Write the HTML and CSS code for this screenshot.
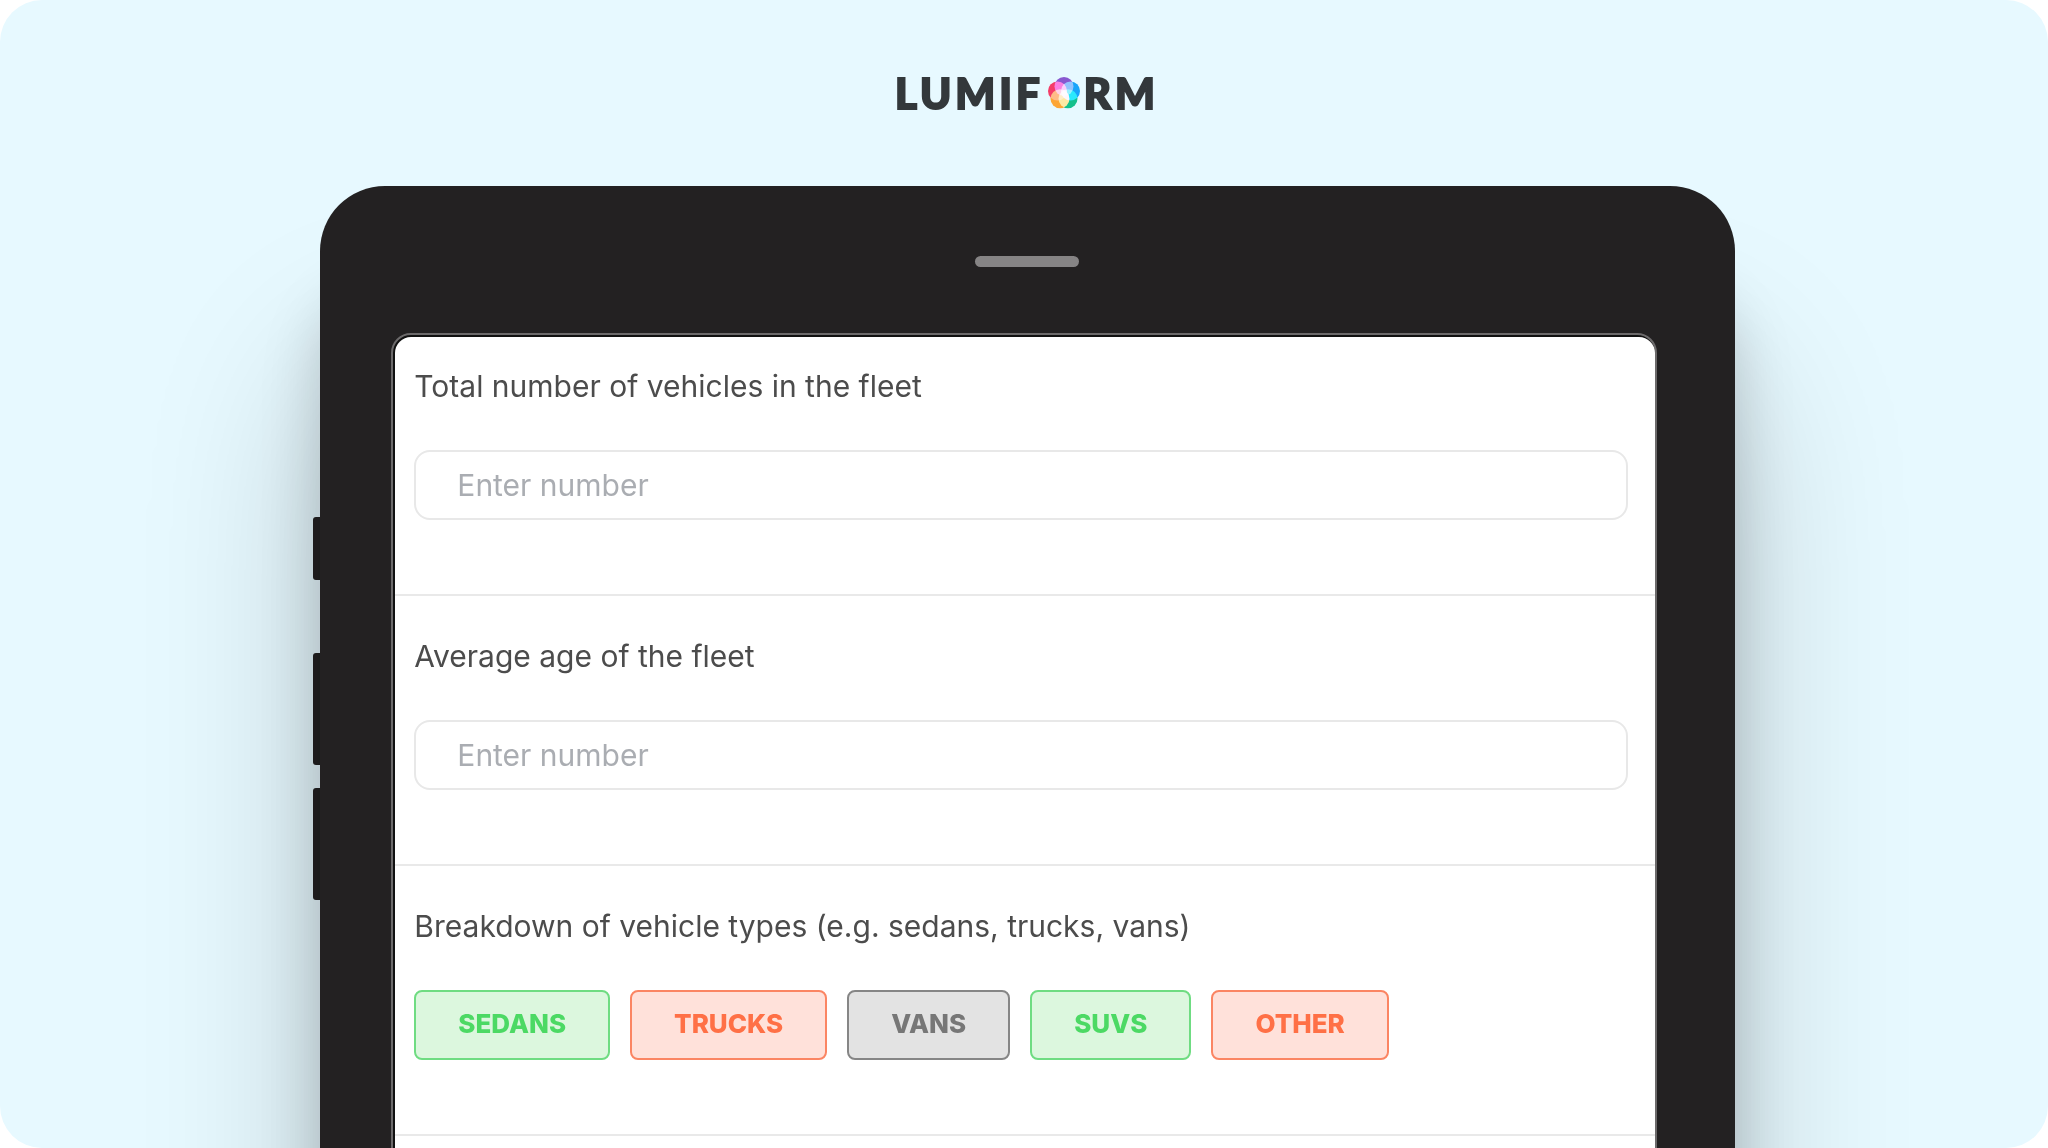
FILE: index.html
```
<!DOCTYPE html>
<html lang="en">
<head>
  <meta charset="UTF-8" />
  <meta name="viewport" content="width=device-width, initial-scale=1" />
  <title>Lumiform - Fleet Checklist</title>
  <link rel="stylesheet" href="styles.css">
</head>
<body>

  <div class="stage">
    <header class="logo">
      <span>LUMIF</span>
      <svg class="logo-mark" viewBox="0 0 34 34" role="img" aria-label="O">
        <g class="petals">
          <circle cx="17" cy="10.5" r="9.5" fill="#8858d0" />
          <circle cx="23.5" cy="15" r="9.5" fill="#18a4fa" />
          <circle cx="21" cy="22.8" r="9.5" fill="#14c08c" />
          <circle cx="13" cy="22.8" r="9.5" fill="#fda634" />
          <circle cx="10.5" cy="15" r="9.5" fill="#f43c68" />
        </g>
      </svg>
      <span>RM</span>
    </header>

    <div class="tablet">
      <div class="side-buttons">
        <span class="key small"></span>
        <span class="key"></span>
        <span class="key"></span>
      </div>

      <div class="bezel">
        <div class="speaker"></div>

        <div class="screen">
          <form class="checklist">
            <div class="question">
              <label for="totalVehicles">Total number of vehicles in the fleet</label>
              <input type="text" id="totalVehicles" placeholder="Enter number" />
            </div>

            <div class="question">
              <label for="averageAge">Average age of the fleet</label>
              <input type="text" id="averageAge" placeholder="Enter number" />
            </div>

            <div class="question" role="group" aria-labelledby="vehicleTypes">
              <p id="vehicleTypes">Breakdown of vehicle types (e.g. sedans, trucks, vans)</p>
              <div class="options">
                <button type="button" class="green">SEDANS</button>
                <button type="button" class="red">TRUCKS</button>
                <button type="button" class="gray">VANS</button>
                <button type="button" class="green">SUVS</button>
                <button type="button" class="red">OTHER</button>
              </div>
            </div>
          </form>
        </div>
      </div>
    </div>
  </div>

</body>
</html>
```
FILE: styles.css
```
* {
  box-sizing: border-box;
}

body {
  margin: 0;
  background-color: #fff;
  font-family: Inter, "Liberation Sans", sans-serif;
}

.stage {
  height: 100vh;
  overflow: hidden;
  border-radius: 42px;
  background-color: #e7f9ff;
}

/* Logo */
.logo {
  display: flex;
  justify-content: center;
  align-items: center;
  gap: 3px;
  padding: 66px 0 66px 6px;
  font-family: Lato, sans-serif;
  font-size: 42px;
  font-weight: 900;
  line-height: 54px;
  letter-spacing: 4px;
  color: #33383b;
  -webkit-text-stroke: 2px #33383b;
}

.logo-mark {
  width: 34px;
  height: 34px;
}

.petals {
  isolation: isolate;
}

.petals circle {
  mix-blend-mode: screen;
}

/* Tablet */
.tablet {
  display: flex;
  width: 69.4%;
  margin: 0 auto;
}

.side-buttons {
  display: flex;
  flex-direction: column;
  gap: 23px;
  width: 7px;
  padding-top: 331px;
}

.key {
  height: 112px;
  border-radius: 3px 0 0 3px;
  background-color: #232122;
}

.key.small {
  height: 63px;
  margin-bottom: 50px;
}

.bezel {
  flex: 1;
  padding: 70px 0 80px;
  border-radius: 65px;
  background-color: #232122;
  box-shadow: 0 180px 180px rgba(0, 0, 0, 0.2), 0 110px 60px rgba(0, 0, 0, 0.18);
}

.speaker {
  width: 104px;
  height: 11px;
  margin: 0 auto 66px;
  border-radius: 6px;
  background-color: #868485;
}

.screen {
  margin: 0 78px 0 71px;
  padding: 2px 0 0 2px;
  border: 2px solid #6c6a6b;
  border-radius: 20px;
  background-color: #111;
}

/* Checklist */
.checklist {
  min-height: 1400px;
  border-radius: 16px;
  background-color: #fff;
}

.question {
  padding: 40px 27px 74px 19px;
  border-bottom: 2px solid #e9e9e9;
}

.question:first-child {
  padding-top: 29px;
}

.question label,
.question p {
  display: block;
  margin: 0 0 44px;
  font-size: 30px;
  line-height: 40px;
  color: #4c4c4c;
}

.question input {
  display: block;
  width: 100%;
  height: 70px;
  padding: 0 41px;
  border: 2px solid #e8e8e8;
  border-radius: 16px;
  font-family: inherit;
  font-size: 30px;
  color: #4c4c4c;
}

.question input::placeholder {
  color: #aaadb2;
}

.options {
  display: flex;
  flex-wrap: wrap;
  gap: 20px;
}

.options button {
  height: 70px;
  padding: 0 42px 4px;
  border: 2px solid;
  border-radius: 8px;
  font-family: inherit;
  font-size: 26px;
  font-weight: 800;
  cursor: pointer;
}

.options .green {
  background-color: #dcf7de;
  border-color: #6fdc82;
  color: #4cd964;
}

.options .red {
  background-color: #ffe1da;
  border-color: #fb8563;
  color: #ff7046;
}

.options .gray {
  background-color: #e3e3e3;
  border-color: #868686;
  color: #777;
}
```
